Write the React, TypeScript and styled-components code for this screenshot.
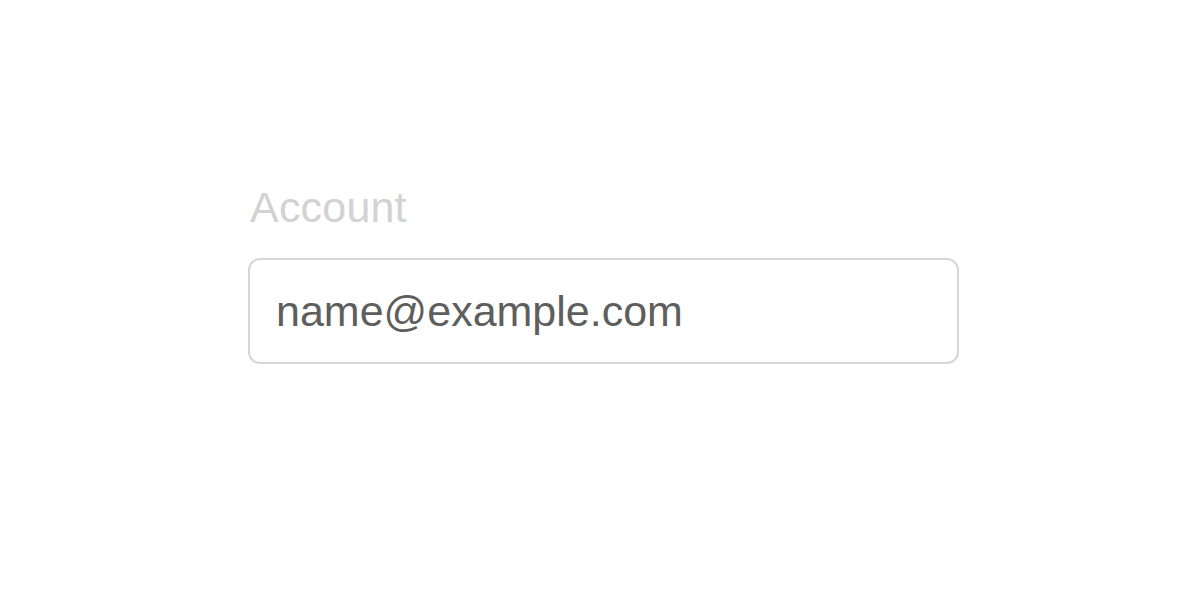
import React from 'react'
import styled, { createGlobalStyle } from 'styled-components'

const GlobalStyle = createGlobalStyle`
  html, body {
    margin: 0;
    padding: 0;
    background: #ffffff;
  }
  body {
    font-family: 'Liberation Sans', Arial, sans-serif;
  }
`

const Page = styled.div`
  width: 1200px;
  height: 600px;
  box-sizing: border-box;
  padding: 182px 0 0 248px;
`

const Field = styled.div`
  display: flex;
  flex-direction: column;
  width: 711px;
`

const Label = styled.label`
  display: block;
  margin-left: 2px;
  font-size: 43px;
  line-height: 50px;
  color: #d2d2d2;
  letter-spacing: 0.2px;
  margin-bottom: 26px;
`

const Input = styled.input`
  box-sizing: border-box;
  width: 100%;
  height: 106px;
  padding: 0 26px;
  border: 2px solid #d6d6d6;
  border-radius: 12px;
  background: #ffffff;
  font-family: 'Liberation Sans', Arial, sans-serif;
  font-size: 43px;
  color: #5e5e5e;
  outline: none;
`

const App = () => {
  return (
    <Page>
      <GlobalStyle />
      <Field>
        <Label htmlFor="account">Account</Label>
        <Input id="account" type="text" defaultValue="name@example.com" readOnly />
      </Field>
    </Page>
  )
}

export default App
